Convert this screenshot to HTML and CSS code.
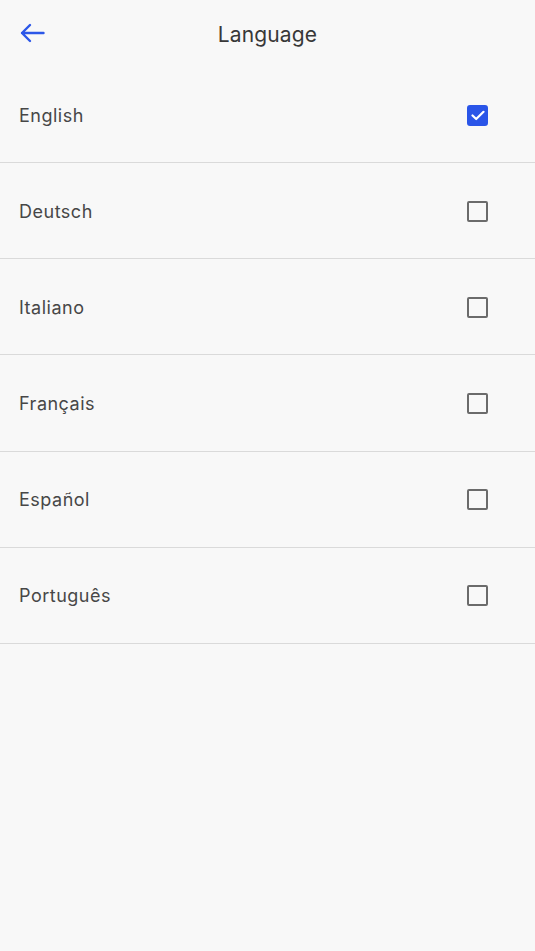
FILE: index.html
```html
<!DOCTYPE html>
<html lang="en">
<head>
<meta charset="utf-8">
<title>Language</title>
<link rel="stylesheet" href="styles.css">
</head>
<body>
<div class="app">
  <header class="topbar">
    <button class="back" aria-label="Back">
      <svg width="26" height="20" viewBox="0 0 26 20"><path d="M24.5 10H3M11 2 3 10l8 8" fill="none" stroke="#2c57e8" stroke-width="2.4" stroke-linecap="round" stroke-linejoin="round"/></svg>
    </button>
    <h1 class="title">Language</h1>
    <span class="spacer"></span>
  </header>
  <ul class="list">
    <li class="row"><span class="label">English</span><span class="box checked"><svg width="14" height="11" viewBox="0 0 14 11"><path d="M1.5 5.5 5.2 9 12.5 1.8" fill="none" stroke="#fff" stroke-width="2.2" stroke-linecap="round" stroke-linejoin="round"/></svg></span></li>
    <li class="row"><span class="label">Deutsch</span><span class="box"></span></li>
    <li class="row"><span class="label">Italiano</span><span class="box"></span></li>
    <li class="row"><span class="label">Français</span><span class="box"></span></li>
    <li class="row"><span class="label">Español</span><span class="box"></span></li>
    <li class="row"><span class="label">Português</span><span class="box"></span></li>
  </ul>
</div>
</body>
</html>
```
FILE: styles.css
```css
html, body {
  margin: 0;
  padding: 0;
  background: #f8f8f8;
}
body {
  font-family: Inter, "Noto Sans", sans-serif;
  color: #404040;
}
.app {
  min-height: 951px;
}
.topbar {
  height: 67px;
  display: flex;
  align-items: center;
  padding: 0 19px;
  box-sizing: border-box;
}
.back {
  border: 0;
  background: none;
  padding: 0;
  width: 28px;
  height: 28px;
  display: flex;
  align-items: center;
  justify-content: flex-start;
  margin-top: -2px;
  cursor: pointer;
}
.title {
  flex: 1;
  text-align: center;
  margin: 2px 0 0;
  font-size: 21px;
  font-weight: 400;
  color: #383838;
  letter-spacing: 0.15px;
}
.spacer {
  width: 28px;
}
.list {
  list-style: none;
  margin: 0;
  padding: 0;
}
.row {
  height: 94.17px;
  border-bottom: 1px solid #dadada;
  display: flex;
  align-items: center;
  justify-content: space-between;
  padding: 1px 47px 0 19px;
  box-sizing: content-box;
}
.label {
  font-size: 18px;
  color: #474747;
  letter-spacing: 0.5px;
}
.box {
  width: 21px;
  height: 21px;
  box-sizing: border-box;
  border: 2px solid #6b6b6b;
  border-radius: 2px;
  display: flex;
  align-items: center;
  justify-content: center;
}
.box.checked {
  background: #2a55e8;
  border-color: #2a55e8;
  border-radius: 3px;
}
```
